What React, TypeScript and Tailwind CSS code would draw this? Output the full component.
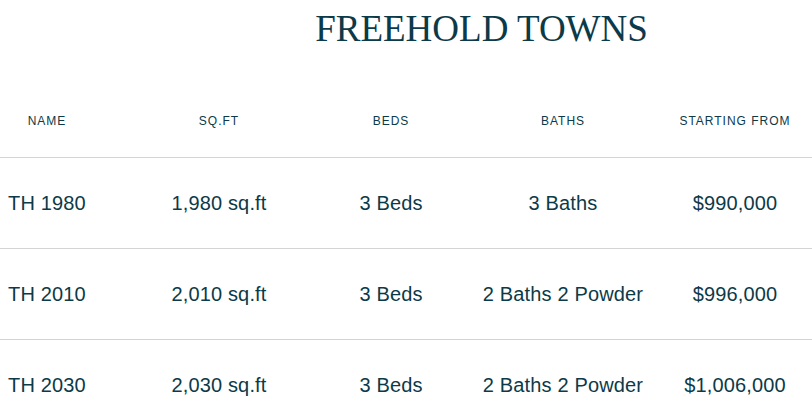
const rows = [
  { name: "TH 1980", sqft: "1,980 sq.ft", beds: "3 Beds", baths: "3 Baths", price: "$990,000" },
  { name: "TH 2010", sqft: "2,010 sq.ft", beds: "3 Beds", baths: "2 Baths 2 Powder", price: "$996,000" },
  { name: "TH 2030", sqft: "2,030 sq.ft", beds: "3 Beds", baths: "2 Baths 2 Powder", price: "$1,006,000" },
];

const headers = ["NAME", "SQ.FT", "BEDS", "BATHS", "STARTING FROM"];

export default function App() {
  return (
    <div className="w-[812px] h-[415px] overflow-hidden bg-white text-[#0c3a48]">
      <h1 className="mt-[10px] pl-[151px] text-center font-['Liberation_Serif',serif] text-[37px] leading-none font-normal">
        FREEHOLD TOWNS
      </h1>

      <div className="mt-[66px] pb-[28px] border-b border-[#d4d4d4]">
        <div className="ml-[-39px] grid grid-cols-[repeat(5,172px)] font-['Liberation_Sans',sans-serif] text-[12px] leading-4 tracking-[1px]">
          {headers.map((h) => (
            <div key={h} className="text-center whitespace-nowrap">
              {h}
            </div>
          ))}
        </div>
      </div>

      {rows.map((r) => (
        <div key={r.name} className="h-[91px] border-b border-[#d4d4d4] flex items-center">
          <div className="ml-[-39px] grid grid-cols-[repeat(5,172px)] font-['Liberation_Sans',sans-serif] text-[20px] leading-6 tracking-[0.15px]">
            <div className="text-center whitespace-nowrap">{r.name}</div>
            <div className="text-center whitespace-nowrap">{r.sqft}</div>
            <div className="text-center whitespace-nowrap">{r.beds}</div>
            <div className="text-center whitespace-nowrap">{r.baths}</div>
            <div className="text-center whitespace-nowrap">{r.price}</div>
          </div>
        </div>
      ))}
    </div>
  );
}
